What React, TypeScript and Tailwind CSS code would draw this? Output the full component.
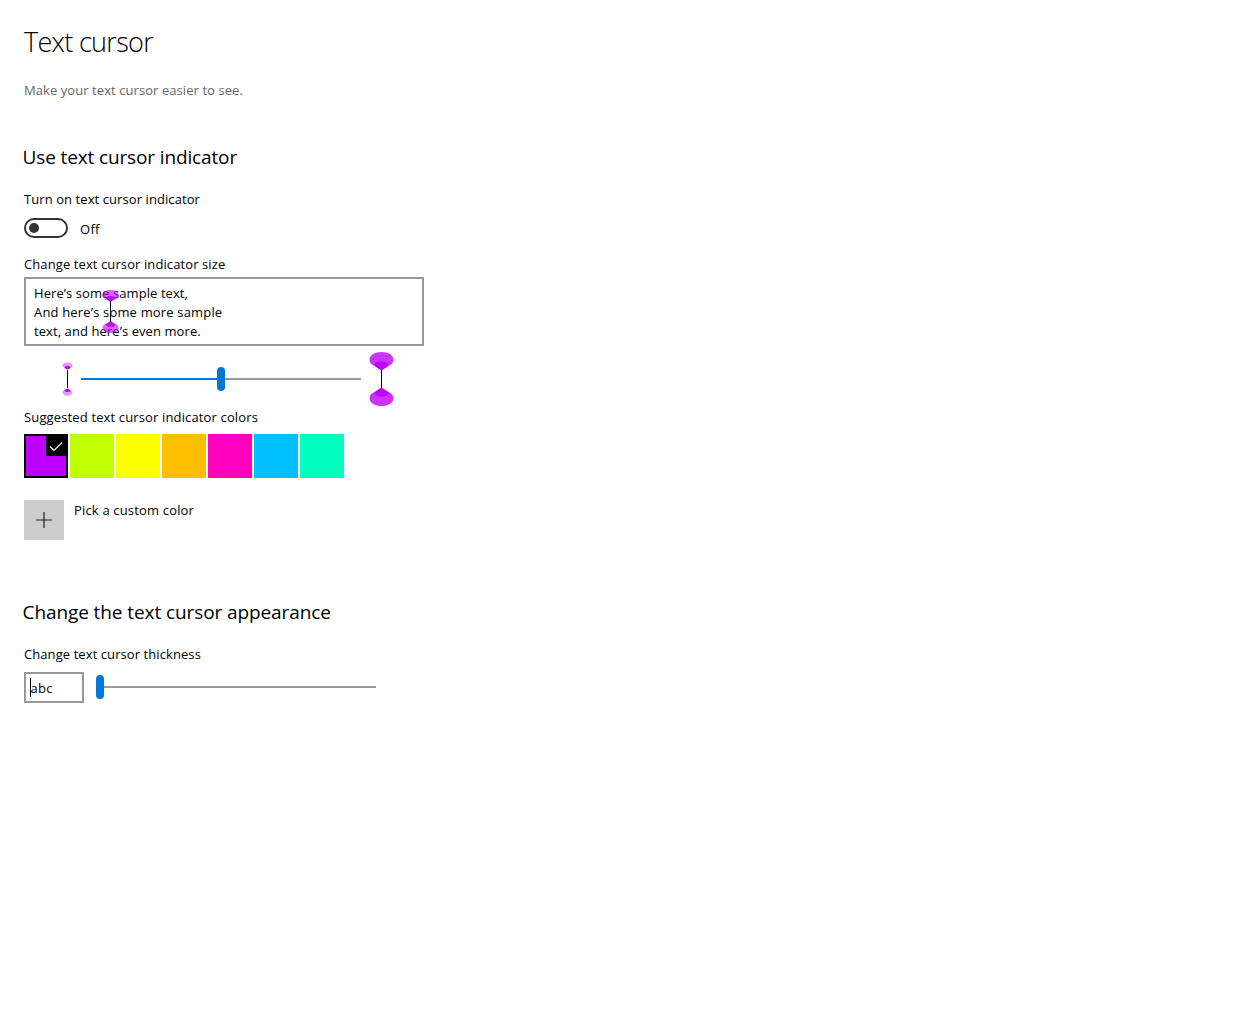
const label = 'text-[13px] leading-5 h-5 whitespace-nowrap';

function SmallLobe() {
  return (
    <>
      <ellipse cx="5.5" cy="3.5" rx="5" ry="3.3" fill="#e39aff" />
      <path d="M2.500 5Q3.500 4 5.500 4T8.500 5Q8 7 5.500 7.500Q3 7 2.500 5Z" fill="#bf00ff" />
    </>
  );
}

function SmallCursor() {
  return (
    <svg width="11" height="34" viewBox="0 0 11 34" className="shrink-0">
      <SmallLobe />
      <g transform="translate(0 34) scale(1 -1)"><SmallLobe /></g>
      <rect x="5" y="8" width="1" height="18" />
    </svg>
  );
}

function LargeLobe() {
  return (
    <>
      <path d="M12.5 0C19 0 24.5 3 24.5 7.8C24.5 11 22 13 19.5 14L12.5 18.2L5.5 14C3 13 .5 11 .5 7.8C.5 3 6 0 12.5 0Z" fill="#cc33ff" />
      <path d="M5.5 12.2C7 10 9.5 9.200 12.5 9.200C15.5 9.200 18 10 19.5 12.2Q19 14.3 17.5 15.200L12.5 18.200L7.5 15.200Q6 14.3 5.5 12.200Z" fill="#bf00ff" />
    </>
  );
}

function LargeCursor() {
  return (
    <svg width="25" height="54" viewBox="0 0 25 54" className="shrink-0">
      <LargeLobe />
      <g transform="translate(0 54) scale(1 -1)"><LargeLobe /></g>
      <rect x="12" y="18" width="1" height="18" />
    </svg>
  );
}

function SampleLobe() {
  return (
    <>
      <path d="M8.5 0C13 0 16.5 2 16.5 5C16.5 8 14 9.300 12.5 9.500L8.5 12L4.5 9.500C3 9.300 .5 8 .5 5C.5 2 4 0 8.5 0Z" fill="#bf00ff" fillOpacity=".6" />
      <path d="M3.5 8.200Q5 6 8.5 6T13.5 8.200L8.5 12Z" fill="#bf00ff" />
    </>
  );
}

function SampleCursor() {
  return (
    <svg width="17" height="43" viewBox="0 0 17 43" className="absolute left-[76px] top-[11px]">
      <SampleLobe />
      <g transform="translate(0 43) scale(1 -1)"><SampleLobe /></g>
      <rect x="8" y="11" width="1" height="21" />
    </svg>
  );
}

const swatches = ['bg-[#bfff00]', 'bg-[#fcff00]', 'bg-[#ffbf00]', 'bg-[#ff00bf]', 'bg-[#00bfff]', 'bg-[#00ffbf]'];

export default function App() {
  return (
    <main className="min-h-[1010px] bg-white pl-6 pt-6 text-black font-['Open_Sans','Noto_Sans',sans-serif]">
      <h1 className="h-9 whitespace-nowrap text-[27px] font-[350] leading-9 tracking-[-0.7px]">Text cursor</h1>
      <p className={`${label} mt-5 tracking-[0.07px] text-[#666]`}>Make your text cursor easier to see.</p>

      <section className="mt-[43px]">
        <h2 className="-ml-[1.5px] h-7 whitespace-nowrap text-[19px] leading-7 tracking-[-0.13px]">Use text cursor indicator</h2>
        <div className={`${label} mt-[18px] tracking-[0.08px]`}>Turn on text cursor indicator</div>
        <div className="mt-[9px] flex h-5 gap-3">
          <div className="flex h-5 w-11 items-center rounded-full border-2 border-[#333] pl-[3px]">
            <div className="size-[10px] rounded-full bg-[#333]" />
          </div>
          <span className={`${label} mt-px tracking-[0.3px]`}>Off</span>
        </div>
        <div className={`${label} mt-4 tracking-[0.1px]`}>Change text cursor indicator size</div>
        <div className="relative mt-[3px] h-[69px] w-[400px] border-2 border-[#999] pl-2 pt-[5px] text-[13px] leading-[19px]">
          <div className="tracking-[0.08px]">Here’s some sample text,</div>
          <div className="tracking-[0.17px]">And here’s some more sample</div>
          <div className="tracking-[0.08px]">text, and here’s even more.</div>
          <SampleCursor />
        </div>
        <div className="mt-[5px] flex h-14 items-center gap-2 pl-[38px]">
          <SmallCursor />
          <div className="flex w-[280px] items-center">
            <div className="h-0.5 w-[136px] bg-[#0078d7]" />
            <div className="h-6 w-2 rounded-full bg-[#0078d7]" />
            <div className="h-0.5 flex-1 bg-[#999]" />
          </div>
          <LargeCursor />
        </div>
        <div className={`${label} tracking-[0.14px]`}>Suggested text cursor indicator colors</div>
        <div className="mt-[7px] flex gap-0.5">
          <div className="flex size-11 justify-end border-2 border-black bg-[#bf00ff]">
            <div className="size-5 bg-black">
              <svg width="20" height="20" viewBox="0 0 20 20" fill="none" stroke="#fff" strokeWidth="1.1"><path d="M4 10.5L8 14.5L16.200 6.300" /></svg>
            </div>
          </div>
          {swatches.map((c) => <div key={c} className={`size-11 ${c}`} />)}
        </div>
        <div className="mt-[22px] flex gap-[10px]">
          <div className="flex size-10 items-center justify-center bg-[#ccc]">
            <svg width="16" height="16" viewBox="0 0 16 16" stroke="#222" strokeWidth="1.2"><path d="M0 8H16M8 0V16" /></svg>
          </div>
          <span className={`${label} tracking-[0.17px]`}>Pick a custom color</span>
        </div>
      </section>

      <section className="mt-[58px]">
        <h2 className="-ml-[1.5px] h-7 whitespace-nowrap text-[19px] leading-7 tracking-[-0.09px]">Change the text cursor appearance</h2>
        <div className={`${label} mt-[18px] tracking-[0.08px]`}>Change text cursor thickness</div>
        <div className="mt-2 flex items-start gap-3">
          <div className="flex h-[31px] w-[60px] items-center border-2 border-[#999] pl-1">
            <div className="h-[19px] w-px bg-black" />
            <span className={`${label} -ml-[0.5px] tracking-[0.3px]`}>abc</span>
          </div>
          <div className="mt-[3px] flex w-[280px] items-center">
            <div className="h-6 w-2 rounded-full bg-[#0078d7]" />
            <div className="h-0.5 flex-1 bg-[#999]" />
          </div>
        </div>
      </section>
    </main>
  );
}
